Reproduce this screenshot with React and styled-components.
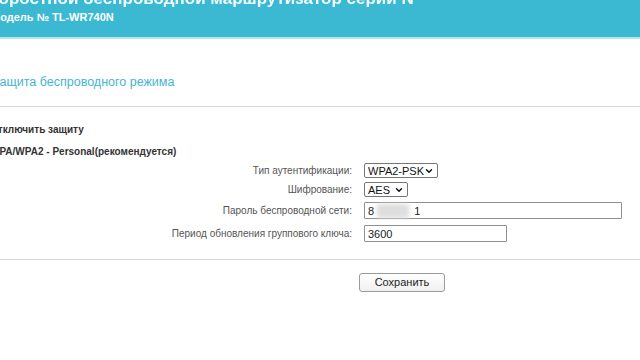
import styled, { createGlobalStyle } from "styled-components";
import { ChevronDown } from "lucide-react";

const Global = createGlobalStyle`
  html, body {
    margin: 0;
    padding: 0;
    background: #fff;
    overflow: hidden;
  }
  body {
    font-family: "Liberation Sans", Arial, sans-serif;
  }
`;

const Page = styled.div`
  width: 640px;
  height: 360px;
  overflow: hidden;
  background: #fff;
`;

const Header = styled.header`
  height: 37px;
  background: #3bb9d3;
  border-bottom: 2px solid #b4e4ee;
  color: #fff;
  overflow: hidden;
`;

const Brand = styled.div`
  margin-top: -10px;
  margin-left: -22px;
  font-size: 17px;
  font-weight: bold;
  white-space: nowrap;
  line-height: 18px;
  opacity: 0.92;
`;

const Model = styled.div`
  margin-left: -9px;
  margin-top: 3px;
  font-size: 11px;
  font-weight: bold;
  white-space: nowrap;
`;

const Content = styled.main`
  margin-left: -10px;
`;

const Title = styled.h1`
  margin: 0;
  padding: 33px 0 0 2px;
  height: 34px;
  font-size: 12.5px;
  font-weight: normal;
  color: #45b6cf;
  line-height: 20px;
  white-space: nowrap;
`;

const Rule = styled.hr`
  margin: 0;
  border: none;
  border-top: 1px solid #d6d6d6;
`;

const Section = styled.section`
  padding: 17px 0 14px;
  display: flex;
  flex-direction: column;
`;

const Option = styled.div`
  font-size: 10px;
  font-weight: bold;
  color: #333;
  height: 12px;
  line-height: 12px;
  margin-bottom: ${(p) => p.$gap || 10}px;
  white-space: nowrap;
`;

const Form = styled.div`
  display: grid;
  grid-template-columns: 362px auto;
  column-gap: 12px;
  align-items: center;
`;

const Label = styled.label`
  font-size: 10px;
  color: #555;
  text-align: right;
  height: ${(p) => p.$h}px;
  line-height: ${(p) => p.$h}px;
  white-space: nowrap;
`;

const Control = styled.div`
  height: ${(p) => p.$h}px;
  display: flex;
  align-items: center;
`;

const SelectWrap = styled.div`
  position: relative;
  display: inline-flex;
`;

const Select = styled.select`
  appearance: none;
  font-family: "Liberation Sans", Arial, sans-serif;
  font-size: 11px;
  color: #111;
  background: #fff;
  border: 1px solid #767676;
  border-radius: 2px;
  height: 15px;
  padding: 0 12px 0 3px;
  width: ${(p) => p.$w}px;
  outline: none;
`;

const Arrow = styled(ChevronDown)`
  position: absolute;
  right: 4px;
  top: 3px;
  width: 10px;
  height: 10px;
  color: #111;
  pointer-events: none;
`;

const Input = styled.input`
  box-sizing: border-box;
  font-family: "Liberation Sans", Arial, sans-serif;
  font-size: 11px;
  color: #222;
  width: ${(p) => p.$w}px;
  height: 17px;
  border: 1px solid #8f8f8f;
  border-radius: 1px;
  padding: 0 3px;
  outline: none;
`;

const PasswordBox = styled.div`
  box-sizing: border-box;
  display: flex;
  align-items: center;
  font-size: 11px;
  color: #222;
  width: ${(p) => p.$w}px;
  height: 17px;
  border: 1px solid #8f8f8f;
  border-radius: 1px;
  padding: 0 3px;
  background: #fff;
`;

const Blur = styled.span`
  display: inline-block;
  width: 32px;
  height: 14px;
  margin: 0 5px 0 3px;
  background: #dedede;
  filter: blur(2px);
`;

const Actions = styled.div`
  padding: 12px 0 0 369px;
`;

const Button = styled.button`
  font-family: "Liberation Sans", Arial, sans-serif;
  font-size: 11px;
  color: #222;
  width: 86px;
  height: 19px;
  background: linear-gradient(#ffffff, #f0f0f0);
  border: 1px solid #9a9a9a;
  border-radius: 3px;
  padding: 0;
`;

export default function App() {
  return (
    <Page>
      <Global />
      <Header>
        <Brand>Скоростной беспроводной маршрутизатор серии N</Brand>
        <Model>Модель № TL-WR740N</Model>
      </Header>
      <Content>
        <Title>Защита беспроводного режима</Title>
        <Rule />
        <Section>
          <Option $gap={10}>Отключить защиту</Option>
          <Option $gap={3}>WPA/WPA2 - Personal(рекомендуется)</Option>
          <Form>
            <Label $h={19}>Тип аутентификации:</Label>
            <Control $h={19}>
              <SelectWrap>
                <Select $w={74} defaultValue="WPA2-PSK">
                  <option>WPA2-PSK</option>
                </Select>
                <Arrow strokeWidth={3.5} />
              </SelectWrap>
            </Control>
            <Label $h={19}>Шифрование:</Label>
            <Control $h={19}>
              <SelectWrap>
                <Select $w={44} defaultValue="AES">
                  <option>AES</option>
                </Select>
                <Arrow strokeWidth={3.5} />
              </SelectWrap>
            </Control>
            <Label $h={23}>Пароль беспроводной сети:</Label>
            <Control $h={23}>
              <PasswordBox $w={258}>
                <span>8</span>
                <Blur />
                <span>1</span>
              </PasswordBox>
            </Control>
            <Label $h={23}>Период обновления группового ключа:</Label>
            <Control $h={23}>
              <Input $w={143} defaultValue="3600" />
            </Control>
          </Form>
        </Section>
        <Rule />
        <Actions>
          <Button>Сохранить</Button>
        </Actions>
      </Content>
    </Page>
  );
}
